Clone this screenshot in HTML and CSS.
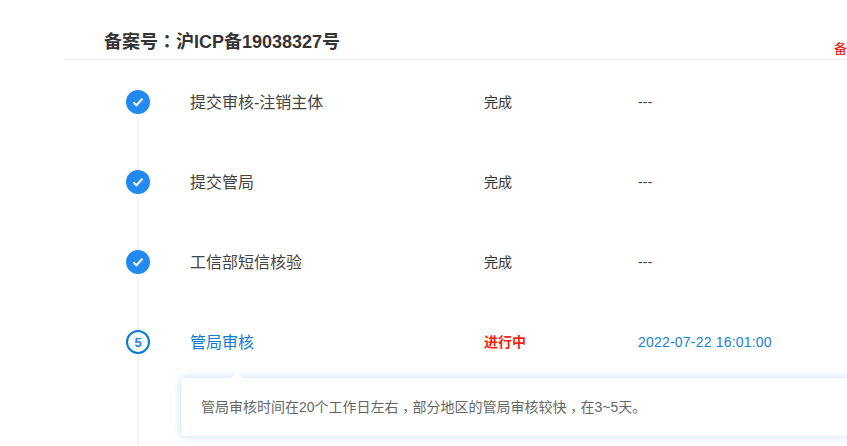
FILE: index.html
```html
<!DOCTYPE html>
<html lang="zh-CN">
<head>
  <meta charset="UTF-8">
  <meta name="viewport" content="width=device-width, initial-scale=1.0">
  <title>备案进度</title>
  <link rel="stylesheet" href="styles.css">
</head>
<body>
  <div class="page">
    <div class="header">
      <h1>备案号<span class="punct" lang="zh-TW">：</span>沪ICP备19038327号</h1>
      <span class="header-note">备</span>
    </div>
    <div class="steps">
      <div class="step">
        <span class="dot"><svg width="12" height="10" viewBox="0 0 12 10"><path d="M1.5 5.2l3 3 6-6.4" fill="none" stroke="#fff" stroke-width="2"/></svg></span>
        <span class="step-name">提交审核-注销主体</span>
        <span class="step-status">完成</span>
        <span class="step-time">---</span>
      </div>
      <div class="step">
        <span class="dot"><svg width="12" height="10" viewBox="0 0 12 10"><path d="M1.5 5.2l3 3 6-6.4" fill="none" stroke="#fff" stroke-width="2"/></svg></span>
        <span class="step-name">提交管局</span>
        <span class="step-status">完成</span>
        <span class="step-time">---</span>
      </div>
      <div class="step">
        <span class="dot"><svg width="12" height="10" viewBox="0 0 12 10"><path d="M1.5 5.2l3 3 6-6.4" fill="none" stroke="#fff" stroke-width="2"/></svg></span>
        <span class="step-name">工信部短信核验</span>
        <span class="step-status">完成</span>
        <span class="step-time">---</span>
      </div>
      <div class="step current">
        <span class="dot">5</span>
        <span class="step-name">管局审核</span>
        <span class="step-status">进行中</span>
        <span class="step-time">2022-07-22 16:01:00</span>
      </div>
      <div class="tip">管局审核时间在20个工作日左右<span class="punct punct-low" lang="zh-TW">，</span>部分地区的管局审核较快<span class="punct punct-low" lang="zh-TW">，</span>在3~5天。</div>
    </div>
  </div>
</body>
</html>
```

FILE: styles.css
```css
html, body {
  margin: 0;
  padding: 0;
  height: 100%;
  overflow: hidden;
  background-color: #fff;
}
body {
  font-family: "Liberation Sans", "Noto Sans CJK SC", sans-serif;
  color: #333;
}
.page {
  width: 847px;
  height: 446px;
  overflow: hidden;
  padding-left: 64px;
  box-sizing: border-box;
}
/* centred full-width punctuation */
.punct {
  font-family: "Noto Sans CJK TC", sans-serif;
}
.punct-low {
  display: inline-block;
  line-height: 1;
  transform: translateY(0.3em);
}
.header {
  display: flex;
  justify-content: space-between;
  align-items: flex-end;
  height: 59px;
  padding-left: 40px;
  border-bottom: 1px solid #eee;
}
.header h1 {
  margin: 0 0 4px;
  font-size: 18px;
  line-height: 26px;
  font-weight: bold;
  color: #333;
}
.header-note {
  font-size: 13px;
  line-height: 20px;
  color: #f00;
}
.steps {
  padding-left: 62px;
  padding-top: 2px;
}
.step {
  position: relative;
  display: flex;
  align-items: center;
  height: 80px;
}
.step::before {
  content: "";
  position: absolute;
  left: 11px;
  top: 40px;
  width: 2px;
  height: 130px;
  background-color: #f2f3f5;
}
.dot {
  position: relative;
  box-sizing: border-box;
  display: flex;
  align-items: center;
  justify-content: center;
  width: 24px;
  height: 24px;
  border-radius: 50%;
  background-color: #2189f0;
  flex-shrink: 0;
}
.step-name {
  width: 294px;
  margin-left: 40px;
  padding-bottom: 2px;
  font-size: 16px;
  color: #444;
}
.step-status {
  width: 154px;
  padding-bottom: 2px;
  font-size: 14px;
  color: #333;
}
.step-time {
  font-size: 14px;
  letter-spacing: 0.2px;
  color: #444;
}
.current .dot {
  background-color: #fff;
  border: 2px solid #0a7ad6;
  color: #2f80ed;
  font-size: 13px;
  font-weight: bold;
}
.current .step-name {
  color: #0a7ad6;
}
.current .step-status {
  color: #f5220f;
  font-weight: bold;
}
.current .step-time {
  color: #1a7fd8;
}
.tip {
  position: relative;
  box-sizing: border-box;
  margin: -4px -20px 0 55px;
  height: 58px;
  padding-left: 20px;
  line-height: 58px;
  font-size: 14px;
  white-space: nowrap;
  color: #666;
  background-color: #fff;
  border-radius: 4px;
  box-shadow: 0 0 8px rgba(90, 150, 240, 0.35);
}
.tip::before {
  content: "";
  position: absolute;
  left: 50px;
  top: -6px;
  border-left: 6px solid transparent;
  border-right: 6px solid transparent;
  border-bottom: 6px solid #fff;
}
```
